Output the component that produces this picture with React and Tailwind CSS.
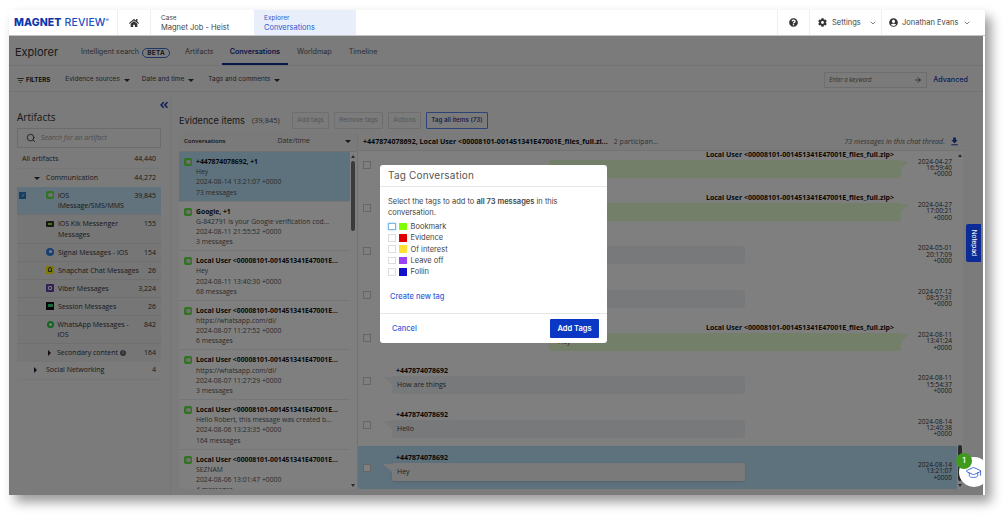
import { Search, GraduationCap, ChevronDown, ArrowRight } from "lucide-react";
import { FaHome, FaQuestionCircle, FaCog, FaUserCircle, FaAngleDoubleLeft } from "react-icons/fa";
import { MdFilterList, MdFileDownload } from "react-icons/md";

const artifacts = [
  { label: ["iOS", "iMessage/SMS/MMS"], count: "39,845", icon: "imessage", selected: true },
  { label: ["iOS Kik Messenger", "Messages"], count: "155", icon: "kik" },
  { label: ["Signal Messages - iOS"], count: "154", icon: "signal" },
  { label: ["Snapchat Chat Messages"], count: "26", icon: "snapchat" },
  { label: ["Viber Messages"], count: "3,224", icon: "viber" },
  { label: ["Session Messages"], count: "26", icon: "session" },
  { label: ["WhatsApp Messages -", "iOS"], count: "842", icon: "whatsapp" },
];

const localUser = "Local User <00008101-001451341E47001E...";

const conversations = [
  { title: "+447874078692, +1", preview: "Hey", date: "2024-08-14 13:21:07 +0000", count: "73 messages", selected: true },
  { title: "Google, +1", preview: "G-842791 is your Google verification cod...", date: "2024-08-11 21:55:52 +0000", count: "3 messages" },
  { title: localUser, preview: "Hey", date: "2024-08-11 13:40:30 +0000", count: "68 messages" },
  { title: localUser, preview: "https://whatsapp.com/dl/", date: "2024-08-07 11:27:52 +0000", count: "6 messages" },
  { title: localUser, preview: "https://whatsapp.com/dl/", date: "2024-08-07 11:27:29 +0000", count: "3 messages" },
  { title: localUser, preview: "Hello Robert, this message was created b...", date: "2024-08-06 13:23:35 +0000", count: "164 messages" },
  { title: localUser, preview: "SEZNAM", date: "2024-08-06 13:01:47 +0000", count: "4 messages" },
];

const zipUser = "Local User <00008101-001451341E47001E_files_full.zip>";

const messages = [
  { out: true, from: zipUser, date: "2024-04-27", time: "16:59:40" },
  { out: true, from: zipUser, date: "2024-04-27", time: "17:00:21" },
  { from: "", date: "2024-05-01", time: "20:17:09" },
  { from: "", date: "2024-07-12", time: "08:57:31", tail: "." },
  { out: true, from: zipUser, text: "Hey", date: "2024-08-11", time: "13:41:24" },
  { from: "+447874078692", text: "How are things", date: "2024-08-11", time: "15:54:37" },
  { from: "+447874078692", text: "Hello", date: "2024-08-14", time: "12:40:38" },
  { from: "+447874078692", text: "Hey", date: "2024-08-14", time: "13:21:07", selected: true },
];

const tags = [
  { name: "Bookmark", color: "bg-[#7fff00]", focus: true },
  { name: "Evidence", color: "bg-[#e00000]" },
  { name: "Of interest", color: "bg-[#ffe033]" },
  { name: "Leave off", color: "bg-[#9a40f5]" },
  { name: "Follin", color: "bg-[#1010c8]" },
];

function Caret({ className = "" }) {
  return <span className={`inline-block w-0 h-0 border-x-[3px] border-x-transparent border-t-[3px] border-t-[#333] ${className}`} />;
}

function CaretRight() {
  return <span className="inline-block w-0 h-0 border-y-[3px] border-y-transparent border-l-[3px] border-l-[#222]" />;
}

function MessageIcon({ className = "" }) {
  return (
    <span className={`flex items-center justify-center w-[8px] h-[8px] rounded-[2px] bg-[#5fe83f] shrink-0 ${className}`}>
      <span className="w-[5px] h-[4px] rounded-full bg-[#e4e4e4]" />
    </span>
  );
}

function ArtifactIcon({ type }) {
  if (type === "imessage") return <MessageIcon />;
  if (type === "kik") {
    return (
      <span className="flex items-center justify-center w-[8px] h-[6px] mt-[2px] rounded-[1px] bg-[#333] shrink-0">
        <span className="w-[4px] h-[2px] bg-[#9be22d]" />
      </span>
    );
  }
  if (type === "signal") {
    return (
      <span className="flex items-center justify-center w-[8px] h-[8px] rounded-full bg-[#2f7fe6] shrink-0">
        <span className="w-[3px] h-[3px] rounded-full bg-white" />
      </span>
    );
  }
  if (type === "snapchat") {
    return (
      <span className="flex items-center justify-center w-[8px] h-[8px] bg-[#fff200] shrink-0">
        <span className="w-[4px] h-[5px] rounded-t-full border border-[#444]" />
      </span>
    );
  }
  if (type === "viber") {
    return (
      <span className="flex items-center justify-center w-[8px] h-[8px] rounded-[1px] bg-[#6a3fb0] shrink-0">
        <span className="w-[4px] h-[4px] rounded-[1px] border border-white" />
      </span>
    );
  }
  if (type === "session") {
    return (
      <span className="flex items-center justify-center w-[8px] h-[8px] bg-[#111] shrink-0">
        <span className="w-[5px] h-[3px] bg-[#2fd07a]" />
      </span>
    );
  }
  return (
    <span className="flex items-center justify-center w-[7px] h-[7px] ml-[0.5px] mt-[1px] rounded-full bg-[#25c93f] shrink-0">
      <span className="w-[3px] h-[3px] rounded-full bg-white" />
    </span>
  );
}

function Header() {
  return (
    <div className="flex h-[26px] bg-white border-b border-[#c4c4c4] shrink-0 font-['Inter',sans-serif] text-[#444]">
      <div className="flex items-center w-[109px] pl-[5px] border-r border-[#eee] text-[10.5px] tracking-[0.1px] whitespace-nowrap text-[#1d4fc4]">
        <span className="font-extrabold text-[#0f36a8]">MAGNET</span>
        <span className="ml-[3px] font-medium">REVIEW</span>
        <span className="text-[5px] mb-[4px]">®</span>
      </div>
      <div className="flex items-center justify-center w-[33px] border-r border-[#eee]">
        <FaHome className="text-[10px] text-[#333]" />
      </div>
      <div className="flex flex-col justify-center w-[103px] pl-[10px] text-[7.5px] leading-[10px]">
        <span className="text-[6.5px]">Case</span>
        <span>Magnet Job - Heist</span>
      </div>
      <div className="flex flex-col justify-center w-[102px] pl-[10px] bg-[#e9eefb] text-[7.5px] leading-[10px] text-[#2a5bd0]">
        <span className="text-[6.5px]">Explorer</span>
        <span>Conversations</span>
      </div>
      <div className="flex-1" />
      <div className="flex items-center justify-center w-[32px] -ml-[1px] border-l border-[#eee]">
        <FaQuestionCircle className="text-[9px] text-[#333]" />
      </div>
      <div className="flex items-center w-[72px] pl-[8px] gap-[5px] border-l border-[#eee] text-[7.5px]">
        <FaCog className="text-[9px] text-[#333]" />
        <span>Settings</span>
        <ChevronDown size={8} className="ml-[3px]" />
      </div>
      <div className="flex items-center w-[104px] pl-[7px] gap-[4px] border-l border-[#eee] text-[7.5px] text-[#444]">
        <FaUserCircle className="text-[9px] text-[#333]" />
        <span>Jonathan Evans</span>
        <ChevronDown size={8} className="ml-[1px]" />
      </div>
    </div>
  );
}

function Tabs() {
  return (
    <div className="flex items-stretch h-[30px] pl-[6px] border-b border-[#e4e4e4] shrink-0 font-['Inter',sans-serif] text-[7.2px] text-[#5a5a5a]">
      <div className="flex items-center w-[66px] pt-[4px] text-[11px] text-[#333]">Explorer</div>
      <div className="flex items-center pt-[4px] whitespace-nowrap">
        Intelligent search
        <span className="ml-[3px] px-[4px] h-[10px] leading-[8px] rounded-full border border-[#3b6fd0] text-[6.5px] font-semibold tracking-[0.3px] text-[#223]">BETA</span>
      </div>
      <div className="flex items-center pt-[4px] ml-[15px]">Artifacts</div>
      <div className="flex items-center ml-[8px] px-[8px] border-b-[2px] border-[#0f2f96] pt-[6px] font-semibold text-[#12308f]">Conversations</div>
      <div className="flex items-center pt-[4px] ml-[9px]">Worldmap</div>
      <div className="flex items-center pt-[4px] ml-[17px]">Timeline</div>
    </div>
  );
}

function Filters() {
  return (
    <div className="flex items-center h-[26px] pl-[7px] pr-[15px] pt-[3px] border-b border-[#e4e4e4] shrink-0 font-['Inter',sans-serif] text-[6.5px] text-[#444]">
      <MdFilterList className="text-[9px] text-[#222]" />
      <span className="ml-[1px] font-bold text-[6.2px] text-[#222]">FILTERS</span>
      <span className="ml-[15px]">Evidence sources</span>
      <Caret className="ml-[4px]" />
      <span className="ml-[12px]">Date and time</span>
      <Caret className="ml-[4px]" />
      <span className="ml-[14px]">Tags and comments</span>
      <Caret className="ml-[4px]" />
      <div className="flex items-center ml-auto w-[103px] h-[16px] px-[4px] justify-between border border-[#dcdcdc] bg-[#f7f7f7]">
        <span className="italic text-[5.5px] text-[#666]">Enter a keyword</span>
        <ArrowRight size={8} className="text-[#222]" />
      </div>
      <span className="ml-[6px] font-medium text-[7.2px] text-[#1d3fb0]">Advanced</span>
    </div>
  );
}

function ArtifactsPanel() {
  return (
    <div className="relative w-[162px] shrink-0 pl-[8px] pr-[9px] border-r border-[#ececec] font-['Open_Sans',sans-serif] text-[7px] text-[#333]">
      <FaAngleDoubleLeft className="absolute right-[1px] top-[8px] text-[10px] text-[#1d3fb0]" />
      <div className="pt-[18px] h-[36px] text-[10px] leading-[14px] text-[#333]">Artifacts</div>
      <div className="flex items-center h-[20px] pl-[8px] border border-[#d8d8d8] bg-[#f7f7f7]">
        <Search size={10} className="text-[#333]" />
        <span className="ml-[5px] italic text-[7px] text-[#999]">Search for an artifact</span>
      </div>
      <div className="flex justify-between items-center h-[21px] pt-[3px] pl-[5px] pr-[5px] border-b border-[#ededed]">
        <span>All artifacts</span>
        <span>44,440</span>
      </div>
      <div className="flex items-center h-[18px] pl-[17px] pr-[5px]">
        <Caret />
        <span className="ml-[6px]">Communication</span>
        <span className="ml-auto">44,272</span>
      </div>
      <div className="bg-[#ececec]">
        {artifacts.map((a) => (
          <div
            key={a.icon}
            className={`flex items-start pt-[4px] pb-[2.7px] pr-[5px] leading-[10.3px] border-b border-[#dedede] ${a.selected ? "bg-[#c4e6fb]" : ""}`}
          >
            {a.selected ? (
              <span className="flex items-center justify-center shrink-0 w-[7px] h-[7px] ml-[2px] mt-[1px] mr-[20px] bg-[#2a7fc0] text-[5px] leading-none text-white">✓</span>
            ) : (
              <span className="w-[29px] shrink-0" />
            )}
            <ArtifactIcon type={a.icon} />
            <span className="ml-[4px] whitespace-nowrap">
              {a.label.map((line) => (
                <span key={line} className="block">{line}</span>
              ))}
            </span>
            <span className="ml-auto">{a.count}</span>
          </div>
        ))}
        <div className="flex items-center h-[18px] pl-[31px] pr-[5px]">
          <CaretRight />
          <span className="ml-[6px]">Secondary content</span>
          <span className="flex items-center justify-center w-[6px] h-[6px] ml-[2px] rounded-full bg-[#666] text-[5px] text-white">i</span>
          <span className="ml-auto">164</span>
        </div>
      </div>
      <div className="flex items-center h-[18px] pl-[17px] pr-[5px] border-b border-[#ededed]">
        <CaretRight />
        <span className="ml-[9px]">Social Networking</span>
        <span className="ml-auto">4</span>
      </div>
    </div>
  );
}

function ConversationList() {
  return (
    <div className="w-[179px] shrink-0 flex flex-col bg-white rounded-[3px] overflow-hidden border-r border-[#e6e6e6]">
      <div className="flex items-center h-[20px] pl-[5px] pr-[6px] bg-[#f4f4f4] border-b border-[#e2e2e2] shrink-0 text-[#555]">
        <span className="text-[6px] font-semibold text-[#222]">Conversations</span>
        <span className="ml-[52px] text-[7px]">Date/time</span>
        <Caret className="ml-auto" />
      </div>
      <div className="flex flex-1 min-h-0">
        <div className="flex-1 min-w-0 overflow-hidden">
          {conversations.map((c, i) => (
            <div
              key={i}
              className={`flex h-[49.6px] pl-[5px] pt-[5px] leading-[10.2px] border-b border-[#ececec] ${c.selected ? "bg-[#bce4fb]" : ""}`}
            >
              <MessageIcon className="mt-[1px] mr-[4px] w-[7.5px]" />
              <div className="min-w-0 whitespace-nowrap text-[6.8px] text-[#555]">
                <div className="font-bold text-[#111]">{c.title}</div>
                <div>{c.preview}</div>
                <div>{c.date}</div>
                <div>{c.count}</div>
              </div>
            </div>
          ))}
        </div>
        <div className="flex flex-col items-center w-[6px] mr-[1px] pt-[3px] pb-[2px] shrink-0">
          <span className="w-0 h-0 border-x-[2px] border-x-transparent border-b-[3px] border-b-[#555]" />
          <span className="w-[4px] h-[70px] mt-[3px] rounded-full bg-[#777]" />
          <span className="w-0 h-0 mt-auto border-x-[2px] border-x-transparent border-t-[3px] border-t-[#555]" />
        </div>
      </div>
    </div>
  );
}

function Bubble({ m }) {
  if (m.out) {
    return (
      <div className="relative ml-[178px] w-[352px] h-[18px] rounded-[2px] bg-[#e8ffd2] pl-[9px] text-[7px] leading-[18px] text-[#444]">
        {m.text}
        <span className="absolute left-full top-[1px] w-0 h-0 border-t-[8px] border-t-[#e8ffd2] border-r-[8px] border-r-transparent" />
      </div>
    );
  }
  return (
    <div className={`relative ml-[21px] w-[353px] h-[18px] rounded-[2px] pl-[5px] text-[7px] leading-[18px] text-[#444] ${m.selected ? "bg-[#f4f4f4] shadow-sm" : "bg-[#eef2f7]"}`}>
      {m.tail ? <span className="block pl-[207px]">{m.tail}</span> : m.text}
      <span className={`absolute right-full top-[1px] w-0 h-0 border-t-[8px] border-l-[9px] border-l-transparent ${m.selected ? "border-t-[#f4f4f4]" : "border-t-[#eef2f7]"}`} />
    </div>
  );
}

function MessagePanel() {
  return (
    <div className="flex flex-col w-[605px] shrink-0 bg-white rounded-[3px] overflow-hidden">
      <div className="flex items-center h-[19px] pl-[5px] pr-[3px] bg-[#f6f6f6] border-b border-[#e6e6e6] shrink-0 text-[7.1px] whitespace-nowrap">
        <span className="font-bold text-[#111]">+447874078692, Local User &lt;00008101-001451341E47001E_files_full.zi...</span>
        <span className="ml-[6px] text-[#666]">2 participan...</span>
        <span className="ml-auto italic text-[#666]">73 messages in this chat thread.</span>
        <MdFileDownload className="ml-[4px] text-[11px] text-[#1d3fb0]" />
      </div>
      <div className="flex flex-1 min-h-0">
        <div className="flex-1 min-w-0 overflow-hidden">
          <div className="-mt-[8.5px]">
            {messages.map((m, i) => (
              <div
                key={i}
                className={`flex h-[43.35px] pl-[5px] ${m.selected ? "bg-[#bce4fb]" : ""}`}
              >
                <span className="w-[8px] h-[8px] mt-[18px] shrink-0 border border-[#ccc] bg-white" />
                <div className="flex-1 min-w-0 pt-[7px]">
                  <div className={`h-[9px] leading-[9px] text-[7px] font-bold text-[#111] whitespace-nowrap ${m.out ? "text-right pr-[17px]" : "pl-[25px]"}`}>
                    {m.from}
                  </div>
                  <div className="mt-[1px]"><Bubble m={m} /></div>
                </div>
                <div className="w-[46px] pt-[16px] pr-[5px] text-right text-[6.5px] leading-[6.4px] text-[#333] shrink-0">
                  <div>{m.date}</div>
                  <div>{m.time}</div>
                  <div>+0000</div>
                </div>
              </div>
            ))}
          </div>
        </div>
        <div className="flex flex-col items-center w-[6px] pt-[3px] pb-[2px] shrink-0">
          <span className="w-0 h-0 border-x-[2px] border-x-transparent border-b-[3px] border-b-[#555]" />
          <span className="w-[4px] h-[36px] mt-auto mb-[3px] rounded-full bg-[#555]" />
          <span className="w-0 h-0 border-x-[2px] border-x-transparent border-t-[3px] border-t-[#555]" />
        </div>
      </div>
    </div>
  );
}

function ActionButton({ children, active }) {
  return (
    <span className={`flex items-center h-[17px] px-[4.5px] rounded-[1px] border text-[6.3px] ${active ? "border-[#5a86ee] text-[#12308f] font-medium" : "border-[#dcdcdc] text-[#aaa]"}`}>
      {children}
    </span>
  );
}

function EvidencePanel() {
  return (
    <div className="flex flex-col flex-1 min-w-0 pl-[8px] pt-[20px] pb-[6px] font-['Open_Sans',sans-serif]">
      <div className="flex items-center h-[17px] mb-[2px] shrink-0">
        <span className="font-['Inter',sans-serif] text-[9.2px] text-[#333]">Evidence items</span>
        <span className="ml-[7px] text-[7.5px] text-[#555]">(39,845)</span>
        <div className="flex ml-[12px] gap-[4.5px] font-['Inter',sans-serif]">
          <ActionButton>Add tags</ActionButton>
          <ActionButton>Remove tags</ActionButton>
          <ActionButton>Actions</ActionButton>
          <ActionButton active>Tag all items (73)</ActionButton>
        </div>
      </div>
      <div className="flex flex-1 min-h-0 mt-[1px]">
        <ConversationList />
        <MessagePanel />
      </div>
    </div>
  );
}

function TagDialog() {
  return (
    <div className="absolute left-[371px] top-[129px] w-[227px] h-[178px] flex flex-col rounded-[3px] bg-white font-['Inter',sans-serif] text-[#444]">
      <div className="flex items-center h-[22px] pl-[8px] border-b border-[#e6e6e6] text-[10px] text-[#555] tracking-[0.2px]">Tag Conversation</div>
      <div className="flex-1 pl-[8px] pt-[9px] text-[7.5px]">
        <p className="leading-[11px] w-[190px]">
          Select the tags to add to <b className="font-semibold">all 73 messages</b> in this conversation.
        </p>
        <div className="mt-[3px]">
          {tags.map((t) => (
            <div key={t.name} className="flex items-center h-[11.3px]">
              <span className={`w-[7.5px] h-[7.5px] border ${t.focus ? "border-[#7fb8e0] shadow-[0_0_2px_#7fb8e0]" : "border-[#ddd]"}`} />
              <span className={`w-[7.5px] h-[7.5px] ml-[3.5px] ${t.color}`} />
              <span className="ml-[4px]">{t.name}</span>
            </div>
          ))}
        </div>
        <div className="mt-[14px] ml-[2px] text-[#3461d8] font-medium">Create new tag</div>
      </div>
      <div className="flex items-center justify-between h-[30px] pl-[12px] pr-[8px] border-t border-[#e6e6e6] text-[7.5px]">
        <span className="text-[#3461d8] font-medium">Cancel</span>
        <span className="flex items-center justify-center w-[49px] h-[19px] rounded-[1px] bg-[#0a38c4] font-semibold text-white">Add Tags</span>
      </div>
    </div>
  );
}

export default function App() {
  return (
    <div className="w-[1005px] h-[516px] pl-[9px] pt-[10px] bg-white overflow-hidden">
      <div className="relative flex flex-col w-[976px] h-[485px] rounded-tr-[3px] overflow-hidden bg-white shadow-[6px_7px_12px_rgba(0,0,0,0.4)]">
        <Header />
        <div className="relative flex-1 min-h-0 mr-[2px] flex flex-col bg-[#f6f6f6]">
          <Tabs />
          <Filters />
          <div className="flex flex-1 min-h-0">
            <ArtifactsPanel />
            <EvidencePanel />
          </div>
          {/* modal backdrop */}
          <div className="absolute inset-0 bg-black/50" />
          <TagDialog />
          <span className="absolute right-[2px] top-[188px] flex items-center justify-center w-[15px] h-[38px] rounded-l-[2px] bg-[#0b2c96] font-['Inter',sans-serif] text-[6.5px] text-white">
            <span className="rotate-90">Notepad</span>
          </span>
          <div className="absolute -right-[6px] bottom-[8px] flex items-center justify-center w-[30px] h-[30px] rounded-full bg-white">
            <GraduationCap size={17} strokeWidth={1.2} className="text-[#2a5bd0] -ml-[2px]" />
          </div>
          <span className="absolute right-[11px] bottom-[26px] flex items-center justify-center w-[16px] h-[16px] rounded-full bg-[#3f9a1e] font-['Inter',sans-serif] text-[7px] font-semibold text-white">1</span>
        </div>
      </div>
    </div>
  );
}
